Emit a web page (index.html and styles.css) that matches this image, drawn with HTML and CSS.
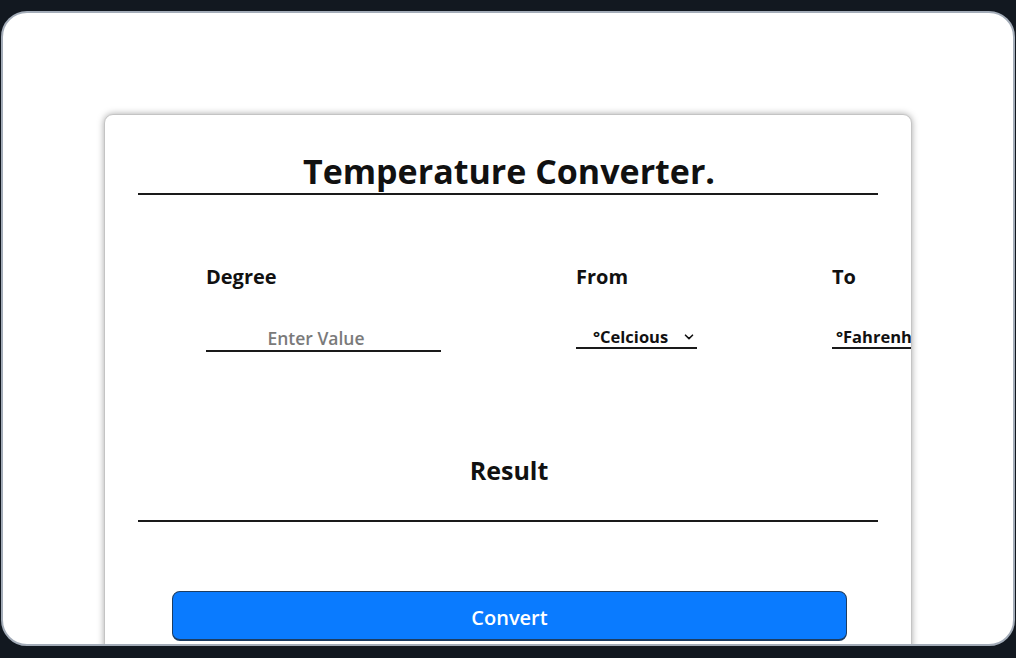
FILE: index.html
```html
<!DOCTYPE html>
<html lang="en">
<head>
<meta charset="utf-8">
<title>Temperature Converter</title>
<link rel="stylesheet" href="styles.css">
</head>
<body>
<div class="frame">
  <div class="card">
    <h1 class="title">Temperature Converter.</h1>
    <div class="rule"></div>
    <div class="form-row">
      <div class="field field-degree">
        <label class="label" for="deg">Degree</label>
        <input id="deg" class="input" type="text" placeholder="Enter Value">
      </div>
      <div class="field field-from">
        <label class="label" for="from">From</label>
        <div class="select-wrap">
          <select id="from" class="select select-from">
            <option>°Celcious</option>
            <option>°Fahrenheit</option>
            <option>Kelvin</option>
          </select>
          <svg class="chevron" width="10" height="6" viewBox="0 0 10 6"><path d="M1.5 1.2 L5 4.6 L8.5 1.2" fill="none" stroke="#111" stroke-width="1.6" stroke-linecap="round" stroke-linejoin="round"/></svg>
        </div>
      </div>
      <div class="field field-to">
        <label class="label" for="to">To</label>
        <div class="select-wrap">
          <select id="to" class="select select-to">
            <option>°Fahrenheit</option>
            <option>°Celcious</option>
            <option>Kelvin</option>
          </select>
        </div>
      </div>
    </div>
    <h2 class="result">Result</h2>
    <div class="rule rule-result"></div>
    <button class="convert" type="button">Convert</button>
  </div>
</div>
</body>
</html>
```
FILE: styles.css
```css
html, body {
  margin: 0;
  padding: 0;
}
body {
  background: #121820;
  width: 1016px;
  height: 658px;
  overflow: hidden;
  font-family: "Open Sans", "Noto Sans", sans-serif;
  color: #111;
}
.frame {
  box-sizing: border-box;
  margin: 11px 0 0 1px;
  width: 1014px;
  height: 635px;
  background: #fff;
  border: 2px solid #a3acb8;
  border-radius: 26px;
  overflow: hidden;
  padding: 101px 0 0 101px;
}
.card {
  box-sizing: border-box;
  width: 808px;
  height: 640px;
  border: 1px solid #c4c4c4;
  border-radius: 9px;
  box-shadow: 0 0 7px rgba(0, 0, 0, 0.35);
  padding: 34px 33px 0 33px;
  overflow: hidden;
  background: #fff;
}
.title {
  margin: 0;
  font-size: 34px;
  font-weight: 700;
  line-height: 44px;
  text-align: center;
  padding-left: 2px;
}
.rule {
  height: 2px;
  background: #1a1a1a;
}
.form-row {
  display: flex;
  gap: 135px;
  padding-left: 68px;
  margin-top: 68px;
}
.field {
  display: flex;
  flex-direction: column;
  flex: none;
}
.field-degree { width: 235px; }
.field-from, .field-to { width: 121px; }
.label {
  font-size: 20px;
  font-weight: 700;
  line-height: 27px;
  margin-bottom: 36px;
}
.input {
  box-sizing: border-box;
  width: 235px;
  border: none;
  border-bottom: 2px solid #1a1a1a;
  outline: none;
  padding: 0 15px 0 0;
  margin: 0;
  height: 26px;
  font-family: inherit;
  font-size: 17.5px;
  font-weight: 600;
  line-height: 23px;
  text-align: center;
  color: #111;
  background: transparent;
}
.input::placeholder {
  color: #7a7a7a;
  opacity: 1;
}
.select-wrap {
  position: relative;
  width: 121px;
}
.select {
  -webkit-appearance: none;
  appearance: none;
  box-sizing: border-box;
  width: 121px;
  height: 23px;
  border: none;
  border-bottom: 2px solid #1a1a1a;
  border-radius: 0;
  outline: none;
  background: transparent;
  margin: 0;
  font-family: inherit;
  font-size: 16.5px;
  font-weight: 700;
  line-height: 21px;
  color: #111;
  padding: 0 0 0 17px;
}
.select-to {
  padding-left: 4px;
  width: 160px;
}
.chevron {
  position: absolute;
  left: 108px;
  top: 8px;
}
.result {
  margin: 101px 0 0 0;
  font-size: 25px;
  font-weight: 700;
  line-height: 34px;
  text-align: center;
  padding-left: 2px;
}
.rule-result {
  margin-top: 33px;
}
.convert {
  display: block;
  box-sizing: border-box;
  margin: 69px 31px 0 34px;
  width: 675px;
  height: 50px;
  background: #0a7bff;
  border: 1px solid #1c3d63;
  border-bottom-width: 2px;
  border-radius: 8px;
  padding: 3px 0 0 0;
  color: #fff;
  font-family: inherit;
  font-size: 20px;
  font-weight: 600;
  cursor: pointer;
}
```
